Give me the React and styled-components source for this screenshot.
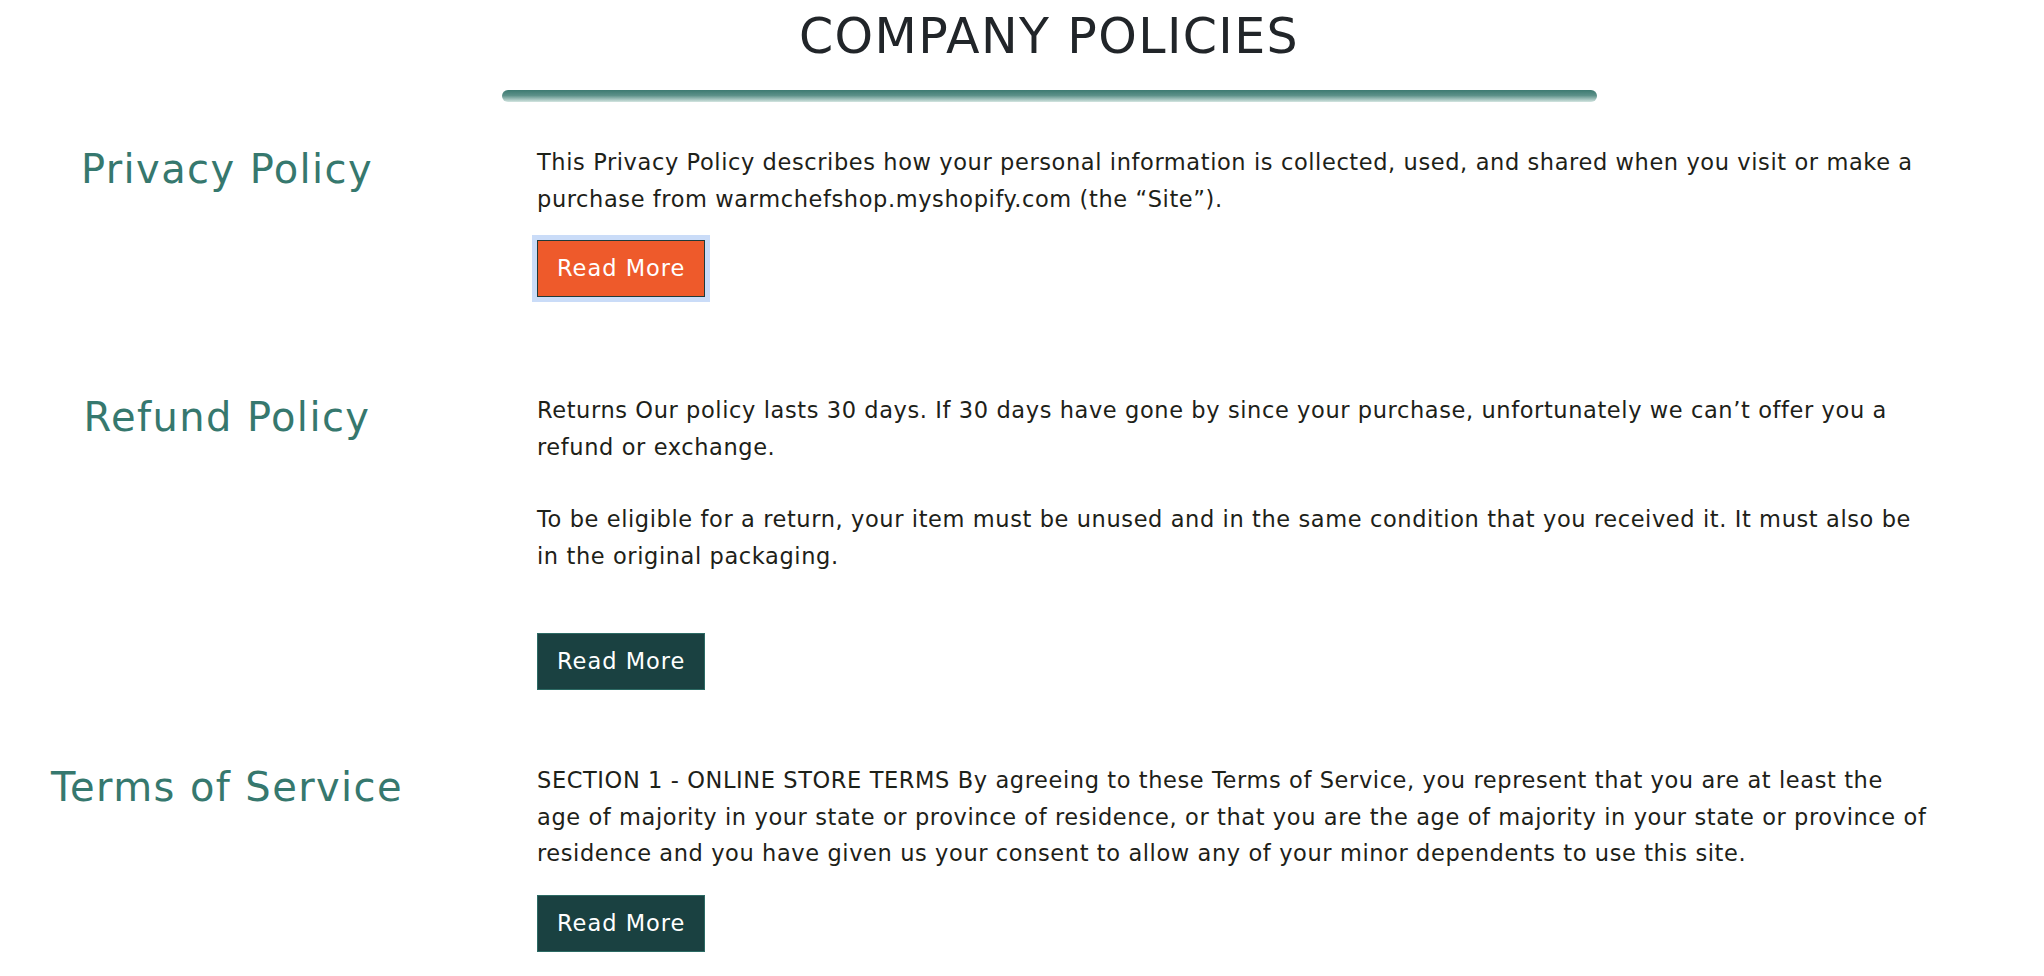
import React from 'react';
import styled, { createGlobalStyle } from 'styled-components';

const GlobalStyle = createGlobalStyle`
  body {
    margin: 0;
    background: #fff;
    font-family: "DejaVu Sans", "Open Sans", sans-serif;
  }
`;

const policies = [
  {
    id: 'privacy',
    title: 'Privacy Policy',
    paragraphs: [
      'This Privacy Policy describes how your personal information is collected, used, and shared when you visit or make a purchase from warmchefshop.myshopify.com (the \u201cSite\u201d).',
    ],
    focused: true,
    space: 95,
    trail: false,
  },
  {
    id: 'refund',
    title: 'Refund Policy',
    paragraphs: [
      'Returns Our policy lasts 30 days. If 30 days have gone by since your purchase, unfortunately we can\u2019t offer you a refund or exchange.',
      'To be eligible for a return, your item must be unused and in the same condition that you received it. It must also be in the original packaging.',
    ],
    focused: false,
    space: 72,
    trail: true,
  },
  {
    id: 'terms',
    title: 'Terms of Service',
    paragraphs: [
      'SECTION 1 - ONLINE STORE TERMS By agreeing to these Terms of Service, you represent that you are at least the age of majority in your state or province of residence, or that you are the age of majority in your state or province of residence and you have given us your consent to allow any of your minor dependents to use this site.',
    ],
    focused: false,
    space: 0,
    trail: false,
  },
];

const CompanyPolicies = () => {
  return (
    <Page>
      <Header>
        <Title>COMPANY POLICIES</Title>
        <Divider />
      </Header>

      <List>
        {policies.map((policy) => (
          <Row key={policy.id} $space={policy.space}>
            <Heading>{policy.title}</Heading>
            <Body>
              {policy.paragraphs.map((text, i) => (
                <Paragraph key={i}>{text}</Paragraph>
              ))}
              <ReadMore $focused={policy.focused} $trail={policy.trail}>
                Read More
              </ReadMore>
            </Body>
          </Row>
        ))}
      </List>
    </Page>
  );
};

const Page = styled.div`
  width: 2044px;
  padding-top: 7px;
  color: #1d2118;
`;

const Header = styled.div`
  display: flex;
  flex-direction: column;
  align-items: center;
  padding-left: 54px;
`;

const Title = styled.h1`
  margin: 0;
  font-size: 49px;
  line-height: 59px;
  font-weight: 400;
  letter-spacing: 1.4px;
  color: #212529;
`;

const Divider = styled.div`
  width: 1095px;
  height: 12px;
  margin-top: 24px;
  border-radius: 6px;
  background: linear-gradient(to bottom, #3d7a71 0%, #5b9088 45%, #d3e5e1 100%);
`;

const List = styled.div`
  display: flex;
  flex-direction: column;
  margin-top: 42px;
`;

const Row = styled.section`
  display: grid;
  grid-template-columns: 454px 1392px;
  column-gap: 83px;
  align-items: start;
  padding-bottom: ${(props) => props.$space}px;
`;

const Heading = styled.h2`
  margin: 0;
  padding-top: 1px;
  text-align: center;
  font-size: 40px;
  line-height: 48px;
  font-weight: 400;
  letter-spacing: 1.4px;
  color: #36786e;
`;

const Body = styled.div`
  display: flex;
  flex-direction: column;
  align-items: flex-start;
`;

const Paragraph = styled.p`
  margin: 0;
  font-size: 22.5px;
  line-height: 36.5px;
  letter-spacing: 0.6px;

  & + & {
    margin-top: 36px;
  }
`;

const ReadMore = styled.button`
  margin-top: ${(props) => (props.$trail ? '59px' : '23px')};
  padding: 10px 19px;
  font-family: inherit;
  font-size: 22.5px;
  line-height: 35px;
  letter-spacing: 1px;
  color: #fff;
  cursor: pointer;
  border-radius: 0;
  border: 1px solid ${(props) => (props.$focused ? '#1e3a3a' : '#2c6a64')};
  background: ${(props) => (props.$focused ? '#ee5a2b' : '#1a4141')};
  box-shadow: ${(props) => (props.$focused ? '0 0 0 5px #cadcf8' : 'none')};

  &:active {
    transform: scale(0.97);
  }
`;

export default function App() {
  return (
    <>
      <GlobalStyle />
      <CompanyPolicies />
    </>
  );
}
